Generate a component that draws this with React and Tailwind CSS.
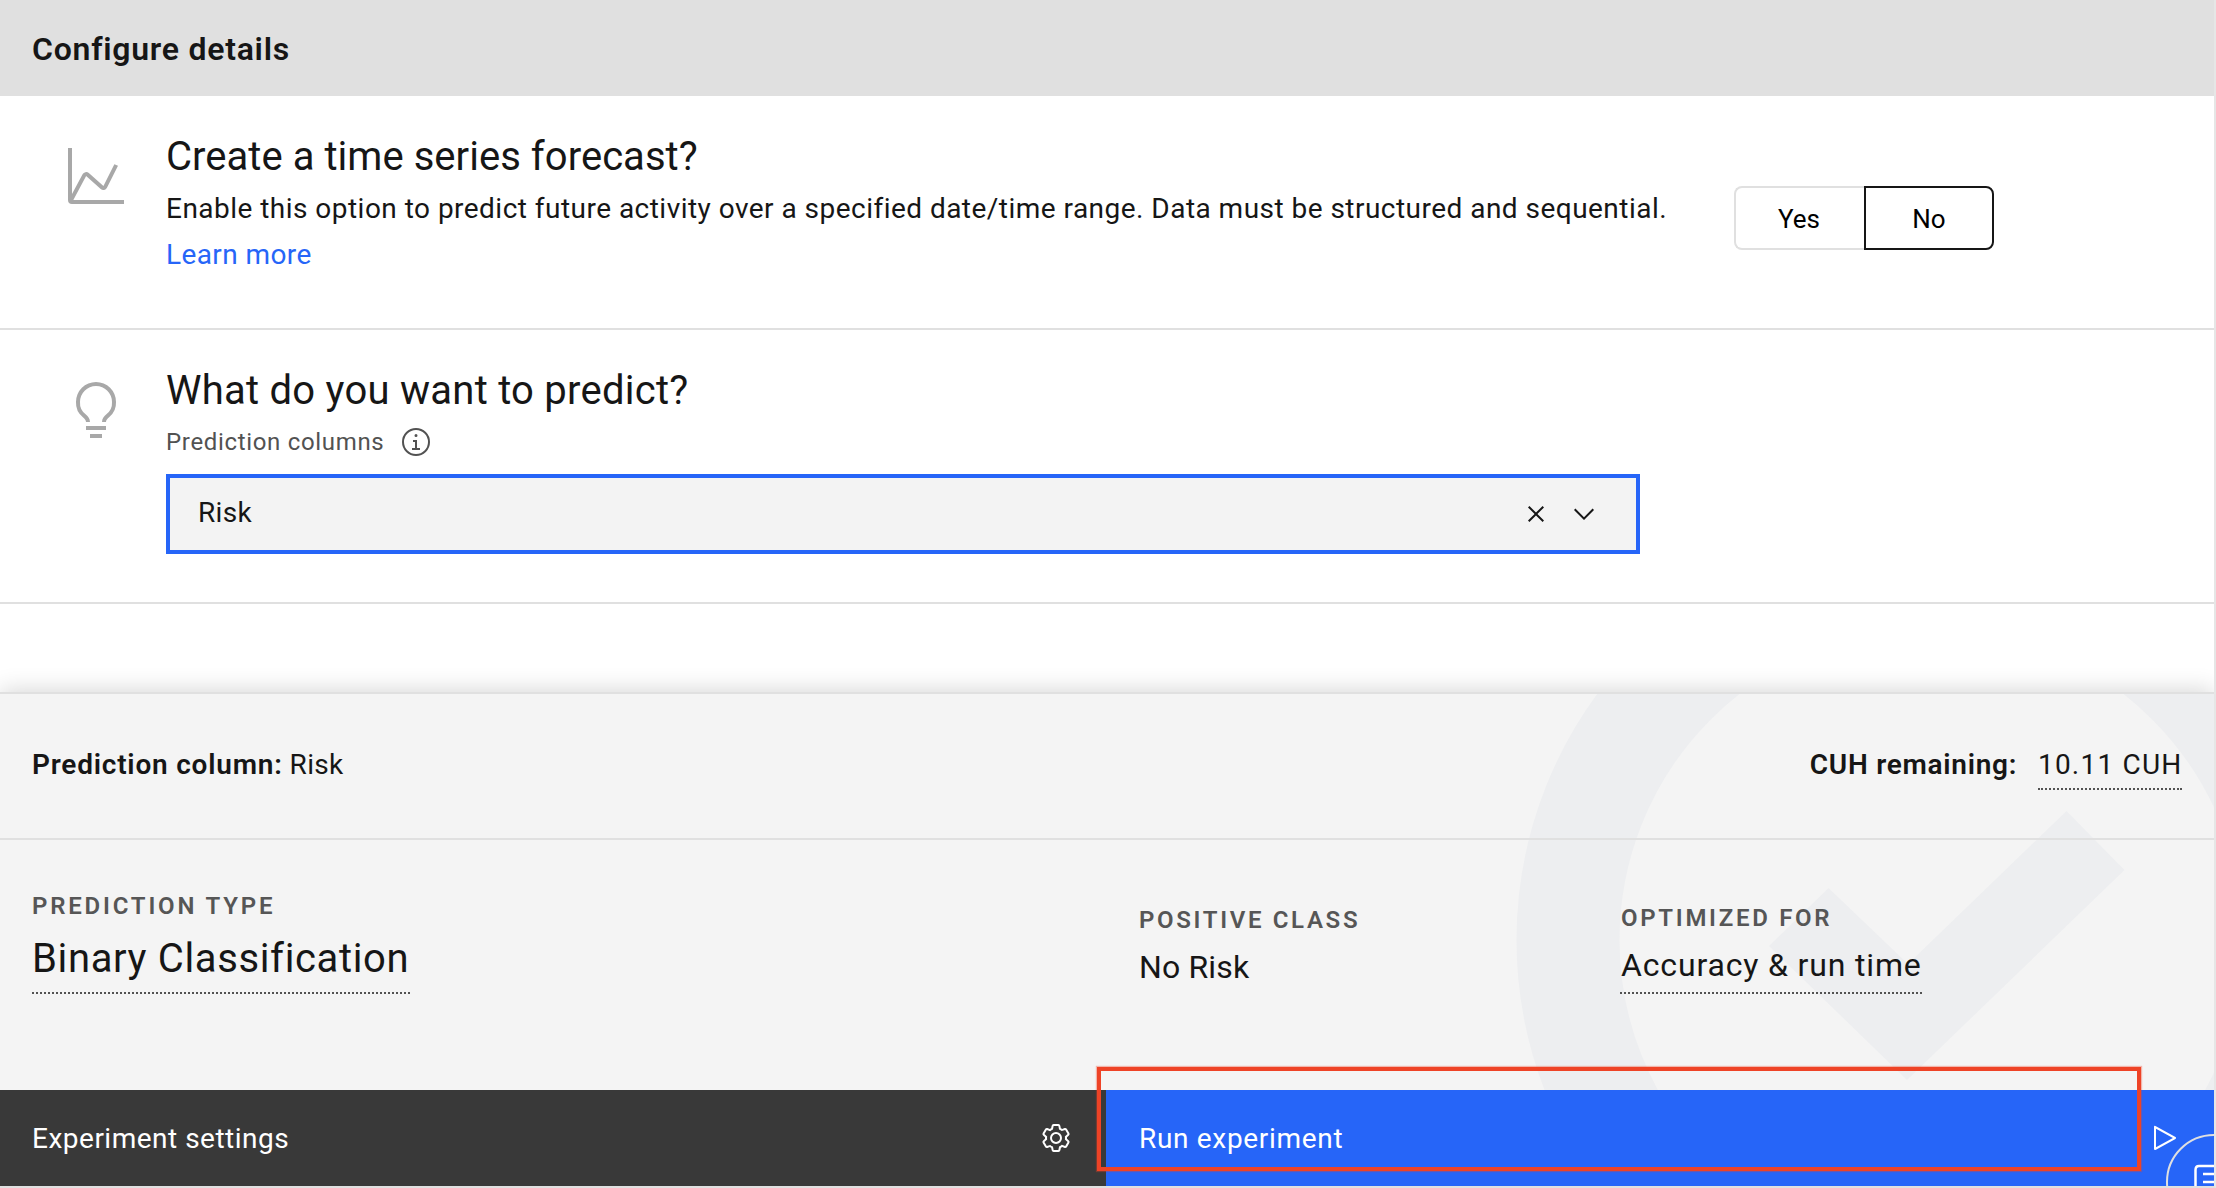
import React from "react";

const PATHS = {
  chart:
    "M4.67,28l6.39-12,7.3,6.49a2,2,0,0,0,1.7.47,2,2,0,0,0,1.42-1.07L27,10.9,25.18,10.1l-5.46,10.95-7.3-6.49a2,2,0,0,0-1.71-.48,2,2,0,0,0-1.42,1.06L4,25V2H2V28a2,2,0,0,0,2,2H30V28Z",
  bulb:
    "M11 24H21V26H11zM13 28H19V30H13zM16 2A10 10 0 0 0 6 12a9.19 9.19 0 0 0 3.46 7.62c1 .93 1.54 1.46 1.54 2.38h2c0-1.84-1.11-2.87-2.19-3.86A7.2 7.2 0 0 1 8 12a8 8 0 0 1 16 0 7.2 7.2 0 0 1-2.82 6.14c-1.07 1-2.18 2-2.18 3.86h2c0-.92.53-1.45 1.54-2.39A9.18 9.18 0 0 0 26 12 10 10 0 0 0 16 2Z",
  info:
    "M17 22V14H13v2h2v6H12v2h8V22zM16 8a1.5 1.5 0 1 0 1.5 1.5A1.5 1.5 0 0 0 16 8zM16,30A14,14,0,1,1,30,16,14,14,0,0,1,16,30ZM16,4A12,12,0,1,0,28,16,12,12,0,0,0,16,4Z",
  close:
    "M17.4141 16 24 9.4141 22.5859 8 16 14.5859 9.4143 8 8 9.4141 14.5859 16 8 22.5859 9.4143 24 16 17.4141 22.5859 24 24 22.5859 17.4141 16z",
  chevron: "M16 22L6 12 7.4 10.6 16 19.2 24.6 10.6 26 12z",
  play:
    "M7,28a1,1,0,0,1-1-1V5a1,1,0,0,1,1.4819-.8763l20,11a1,1,0,0,1,0,1.7525l-20,11A1,1,0,0,1,7,28ZM8,6.6909V25.3088L24.9248,16Z",
  gear:
    "M27,16.76c0-.25,0-.5,0-.76s0-.51,0-.77l1.92-1.68A2,2,0,0,0,29.3,11L26.94,7a2,2,0,0,0-1.73-1,2,2,0,0,0-.64.1l-2.43.82a11.35,11.35,0,0,0-1.31-.75l-.51-2.52a2,2,0,0,0-2-1.61H13.64a2,2,0,0,0-2,1.61l-.51,2.52a11.48,11.48,0,0,0-1.32.75L7.43,6.06A2,2,0,0,0,6.79,6,2,2,0,0,0,5.06,7L2.7,11a2,2,0,0,0,.41,2.51L5,15.24c0,.25,0,.5,0,.76s0,.51,0,.77L3.11,18.45A2,2,0,0,0,2.7,21L5.06,25a2,2,0,0,0,1.73,1,2,2,0,0,0,.64-.1l2.43-.82a11.35,11.35,0,0,0,1.31.75l.51,2.52a2,2,0,0,0,2,1.61h4.72a2,2,0,0,0,2-1.61l.51-2.52a11.48,11.48,0,0,0,1.32-.75l2.42.82a2,2,0,0,0,.64.1,2,2,0,0,0,1.73-1L29.3,21a2,2,0,0,0-.41-2.51ZM25.21,24l-3.43-1.16a8.86,8.86,0,0,1-2.71,1.57L18.36,28H13.64l-.71-3.55a9.36,9.36,0,0,1-2.7-1.57L6.79,24,4.43,20l2.72-2.4a8.9,8.9,0,0,1,0-3.13L4.43,12,6.79,8l3.43,1.16a8.86,8.86,0,0,1,2.71-1.57L13.64,4h4.72l.71,3.55a9.36,9.36,0,0,1,2.7,1.57L25.21,8,27.57,12l-2.72,2.4a8.9,8.9,0,0,1,0,3.13L27.57,20ZM16,22a6,6,0,1,1,6-6A5.94,5.94,0,0,1,16,22Zm0-10a3.91,3.91,0,0,0-4,4,3.91,3.91,0,0,0,4,4,3.91,3.91,0,0,0,4-4A3.91,3.91,0,0,0,16,12Z",
};

function Icon({ name, className }) {
  return (
    <svg viewBox="0 0 32 32" fill="currentColor" className={"shrink-0 " + className} aria-hidden="true">
      <path fillRule={name === "info" || name === "gear" || name === "play" ? "evenodd" : "nonzero"} d={PATHS[name]} />
    </svg>
  );
}

function Watermark() {
  return (
    <svg
      className="pointer-events-none absolute top-0 right-0 h-[396px] w-[714px]"
      viewBox="1500 694 714 396"
      aria-hidden="true"
    >
      <circle cx="1931.5" cy="940" r="363.5" fill="none" stroke="#edeef0" strokeWidth="103" />
      <path d="M1769 946 1828.5 888 1908 964 2066.5 811 2124.5 870 1907 1080Z" fill="#edeef0" />
    </svg>
  );
}

function TimeSeries() {
  return (
    <section className="flex h-[234px] items-start border-b-2 border-[#e0e0e0] pl-16">
      <Icon name="chart" className="mt-12 size-16 text-[#a8a8a8]" />
      <div className="ml-[38px] w-[1568px] pt-[37px]">
        <h2 className="text-[40px] leading-[48px] tracking-[0.04px]">Create a time series forecast?</h2>
        <p className="mt-[5px] text-[28px] leading-[46px] tracking-[0.47px] whitespace-nowrap">
          Enable this option to predict future activity over a specified date/time range. Data must be structured and
          sequential.
        </p>
        <a className="block text-[28px] leading-[46px] tracking-[0.4px] text-[#2665f8]">Learn more</a>
      </div>
      <div className="mt-[90px] flex h-16 text-[26px] text-black">
        <button className="w-[130px] rounded-l-lg border-2 border-r-0 border-[#e0e0e0] pt-[2px] pr-[2px]">Yes</button>
        <button className="w-[130px] rounded-r-lg border-2 border-[#161616] pt-[2px]">No</button>
      </div>
    </section>
  );
}

function PredictColumn() {
  return (
    <section className="flex h-[274px] items-start border-b-2 border-[#e0e0e0] pl-16">
      <Icon name="bulb" className="mt-12 size-16 text-[#a8a8a8]" />
      <div className="ml-[38px] pt-[37px]">
        <h2 className="text-[40px] leading-[48px] tracking-[0.25px]">What do you want to predict?</h2>
        <div className="mt-[11px] flex h-8 items-center text-[#525252]">
          <span className="w-[234px] text-2xl tracking-[0.67px]">Prediction columns</span>
          <Icon name="info" className="size-8" />
        </div>
        <div className="mt-4 flex h-20 w-[1474px] items-center gap-4 border-4 border-[#2665f8] bg-[#f3f3f3] pr-9 pl-7">
          <span className="grow pb-[3px] text-[28px] tracking-[0.3px]">Risk</span>
          <Icon name="close" className="size-8" />
          <Icon name="chevron" className="size-8" />
        </div>
      </div>
    </section>
  );
}

function Summary() {
  return (
    <section className="relative h-[398px] border-t-2 border-[#e0e0e0] bg-[#f4f4f4] shadow-[0_-2px_22px_rgba(0,0,0,0.16)]">
      <Watermark />
      <div className="relative flex h-[146px] items-start border-b-2 border-[#e0e0e0] px-8 pt-[47px] text-[28px] leading-[47px]">
        <span className="font-semibold tracking-[0.78px]">Prediction column:</span>
        <span className="ml-[7px] grow tracking-[0.3px]">Risk</span>
        <span className="mr-[21px] font-semibold tracking-[0.72px]">CUH remaining:</span>
        <span className="w-[144px] border-b-2 border-dotted border-[#525252] tracking-[1.2px] whitespace-nowrap">
          10.11 CUH
        </span>
      </div>
      <div className="relative flex items-start pl-8">
        <div className="w-[1107px] pt-[50px]">
          <div className="text-2xl leading-[33px] font-semibold tracking-[2.8px] text-[#565656]">PREDICTION TYPE</div>
          <div className="mt-[2px] w-[378px] border-b-2 border-dotted border-[#525252] text-[40px] leading-[67px] tracking-[0.64px] whitespace-nowrap">
            Binary Classification
          </div>
        </div>
        <div className="w-[481px] pt-16">
          <div className="text-2xl leading-[33px] font-semibold tracking-[2.65px] text-[#565656]">POSITIVE CLASS</div>
          <div className="mt-[10px] text-[32px] leading-10 tracking-[0.16px]">No Risk</div>
        </div>
        <div className="pt-[62px]">
          <div className="pl-px text-2xl leading-[33px] font-semibold tracking-[2.7px] text-[#565656]">
            OPTIMIZED FOR
          </div>
          <div className="mt-[3px] w-[302px] border-b-2 border-dotted border-[#525252] pl-px text-[32px] leading-[54px] tracking-[0.84px] whitespace-nowrap">
            Accuracy &amp; run time
          </div>
        </div>
      </div>
    </section>
  );
}

function Actions() {
  return (
    <footer className="relative flex h-24 text-[28px] text-white">
      <button className="flex w-[1106px] items-center justify-between bg-[#393939] pr-[34px] pl-8">
        <span className="pt-px tracking-[0.5px]">Experiment settings</span>
        <Icon name="gear" className="size-8" />
      </button>
      <button className="flex grow items-center justify-between bg-[#2665f8] pr-[34px] pl-[33px]">
        <span className="pt-px tracking-[0.68px]">Run experiment</span>
        <Icon name="play" className="size-8" />
      </button>
    </footer>
  );
}

function ChatBubble() {
  return (
    <div className="absolute top-[1134px] left-[2166px] size-24 rounded-full border-2 border-[#e0e0e0] bg-[#2665f8]">
      <svg
        viewBox="0 0 40 40"
        className="mt-[28px] ml-[26px] size-10"
        fill="none"
        stroke="white"
        strokeWidth="2.5"
        aria-hidden="true"
      >
        <path d="M5 2H34Q38 2 38 6V26Q38 30 34 30H24L19 38M19 30H5Q1.500 30 1.500 26V6Q1.500 2 5 2M9 10H32M9 18H24" />
      </svg>
    </div>
  );
}

export default function App() {
  return (
    <div className="relative h-[1188px] w-[2216px] overflow-hidden border-r-2 border-b-2 border-r-[#e6e6e6] border-b-[#e0e0e0] bg-white font-['Roboto',sans-serif] text-[#161616]">
      <header className="flex h-24 items-center bg-[#e0e0e0] pt-[2px] pl-8 text-[32px] font-semibold tracking-[0.74px]">
        Configure details
      </header>
      <TimeSeries />
      <PredictColumn />
      <div className="h-[88px]" />
      <Summary />
      <Actions />
      <div className="absolute top-[1067px] left-[1097px] h-[104px] w-[1044px] border-4 border-[#ee4326] shadow-[0_0_1px_1px_rgba(238,67,38,0.35)]" />
      <ChatBubble />
    </div>
  );
}
